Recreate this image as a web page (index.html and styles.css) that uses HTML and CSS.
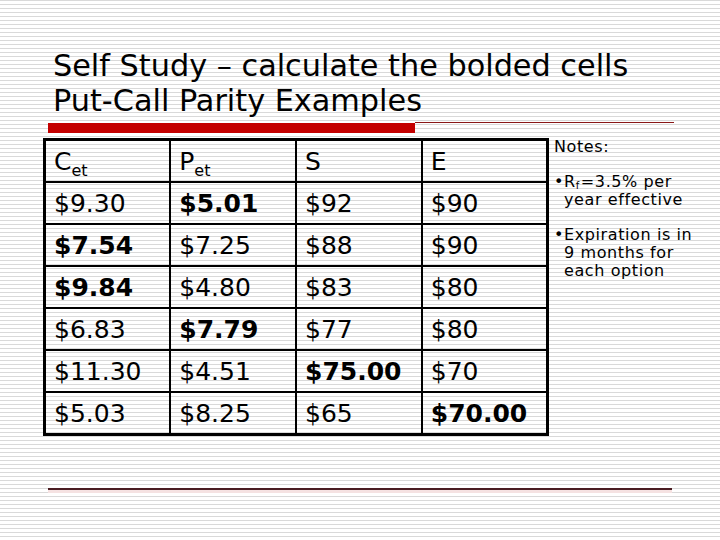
FILE: index.html
```html
<!DOCTYPE html>
<html>
<head>
<meta charset="utf-8">
<link rel="stylesheet" href="styles.css">
</head>
<body>
<div class="slide">
  <h1 class="title">Self Study – calculate the bolded cells<br>Put-Call Parity Examples</h1>
  <div class="rule">
    <div class="rule-bar"></div>
    <div class="rule-line"></div>
  </div>
  <div class="content">
    <table class="grid">
      <tr><td>C<sub>et</sub></td><td>P<sub>et</sub></td><td>S</td><td>E</td></tr>
      <tr><td>$9.30</td><td class="b">$5.01</td><td>$92</td><td>$90</td></tr>
      <tr><td class="b">$7.54</td><td>$7.25</td><td>$88</td><td>$90</td></tr>
      <tr><td class="b">$9.84</td><td>$4.80</td><td>$83</td><td>$80</td></tr>
      <tr><td>$6.83</td><td class="b">$7.79</td><td>$77</td><td>$80</td></tr>
      <tr><td>$11.30</td><td>$4.51</td><td class="b">$75.00</td><td>$70</td></tr>
      <tr><td>$5.03</td><td>$8.25</td><td>$65</td><td class="b">$70.00</td></tr>
    </table>
    <div class="notes">
      <div class="notes-head">Notes:</div>
      <ul class="notes-list">
        <li><span class="dot">•</span><span class="txt">R<sub class="fs">f</sub>=3.5% per<br>year effective</span></li>
        <li><span class="dot">•</span><span class="txt">Expiration is in<br>9 months for<br>each option</span></li>
      </ul>
    </div>
  </div>
  <div class="footer-rule"></div>
</div>
</body>
</html>
```
FILE: styles.css
```css
html, body {
  margin: 0;
  padding: 0;
}
body {
  width: 720px;
  height: 540px;
  overflow: hidden;
  background: repeating-linear-gradient(to bottom, #d9d9d9 0px, #d9d9d9 1px, #ffffff 1px, #ffffff 4px);
  font-family: "DejaVu Sans", Verdana, sans-serif;
  color: #000;
}
.slide {
  padding-top: 48px;
}
.title {
  margin: 0;
  padding-left: 53px;
  font-size: 30.3px;
  font-weight: normal;
  line-height: 35px;
}
.rule {
  display: flex;
  align-items: flex-start;
  margin-top: 4px;
  padding-left: 48px;
}
.rule-bar {
  width: 367px;
  height: 10px;
  margin-top: 1px;
  background: #c40000;
}
.rule-line {
  width: 259px;
  height: 1px;
  background: #8a1818;
}
.content {
  display: flex;
  align-items: flex-start;
  margin-top: 5px;
  padding-left: 43px;
}
.grid {
  flex: none;
  border-collapse: collapse;
  table-layout: fixed;
  width: 506px;
  border: 3px solid #000;
}
.grid td {
  height: 40px;
  padding: 0 0 0 8px;
  border: 2px solid #000;
  font-size: 25px;
  line-height: 29px;
  vertical-align: middle;
  white-space: nowrap;
}
.grid td.b {
  font-weight: bold;
}
.grid sub {
  font-size: 16px;
  line-height: 0;
  vertical-align: -6px;
}
.notes {
  margin-left: 5px;
  font-size: 16px;
  line-height: 18px;
  letter-spacing: 0.6px;
  white-space: nowrap;
}
.notes-list {
  list-style: none;
  margin: 0;
  padding: 0;
}
.notes-list li {
  display: flex;
  margin-top: 17px;
}
.dot {
  width: 10px;
  flex: none;
  font-size: 16px;
  letter-spacing: 0;
}
.txt {
  flex: 1;
}
.fs {
  font-size: 10px;
  line-height: 0;
  vertical-align: -2px;
  padding-right: 1px;
}
.footer-rule {
  margin-top: 52px;
  margin-left: 48px;
  width: 624px;
  height: 2px;
  background: #4a1c22;
  border-bottom: 3px solid #f5e2e2;
}
```
